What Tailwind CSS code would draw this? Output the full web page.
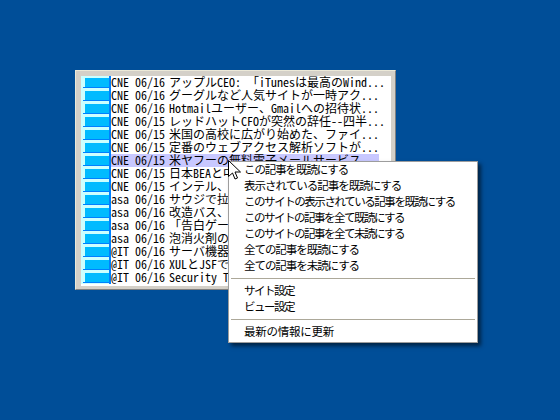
<!DOCTYPE html>
<html><head><meta charset="utf-8">
<script src="https://cdn.jsdelivr.net/npm/@tailwindcss/browser@4"></script>
</head>
<body class="m-0">
<div class="relative w-[560px] h-[420px] overflow-hidden bg-[#004e98] font-['Noto_Sans_Mono_CJK_JP','Noto_Sans_CJK_JP',monospace] text-[12px] text-black">
  <div class="absolute left-[75px] top-[70px] w-[321px] h-[220px] bg-[#d4d0c8] border border-[#ece9d8] border-r-[#808080] border-b-[#808080] pl-[5px] pt-[5px]">
    <div class="flex flex-col w-[310px] h-[210px] bg-white overflow-hidden">
      <div class="flex h-[13px] leading-[12px]"><div class="w-[30px] shrink-0 bg-[#ccffff] border-r-2 border-[#0080ff] pl-[4px] pt-[2px]"><div class="w-[24px] h-[9px] bg-[#00bbff]"></div><div class="-ml-[2px] w-[26px] h-px bg-[#0080ff]"></div></div><div class="whitespace-pre">CNE 06/16 <span class="-ml-[2px]">アップルCEO: 「iTunesは最高のWind...</span></div></div>
      <div class="flex h-[13px] leading-[12px]"><div class="w-[30px] shrink-0 bg-[#ccffff] border-r-2 border-[#0080ff] pl-[4px] pt-[2px]"><div class="w-[24px] h-[9px] bg-[#00bbff]"></div><div class="-ml-[2px] w-[26px] h-px bg-[#0080ff]"></div></div><div class="whitespace-pre">CNE 06/16 <span class="-ml-[2px]">グーグルなど人気サイトが一時アク...</span></div></div>
      <div class="flex h-[13px] leading-[12px]"><div class="w-[30px] shrink-0 bg-[#ccffff] border-r-2 border-[#0080ff] pl-[4px] pt-[2px]"><div class="w-[24px] h-[9px] bg-[#00bbff]"></div><div class="-ml-[2px] w-[26px] h-px bg-[#0080ff]"></div></div><div class="whitespace-pre">CNE 06/16 <span class="-ml-[2px]">Hotmailユーザー、Gmailへの招待状...</span></div></div>
      <div class="flex h-[13px] leading-[12px]"><div class="w-[30px] shrink-0 bg-[#ccffff] border-r-2 border-[#0080ff] pl-[4px] pt-[2px]"><div class="w-[24px] h-[9px] bg-[#00bbff]"></div><div class="-ml-[2px] w-[26px] h-px bg-[#0080ff]"></div></div><div class="whitespace-pre">CNE 06/15 <span class="-ml-[2px]">レッドハットCFOが突然の辞任--四半...</span></div></div>
      <div class="flex h-[13px] leading-[12px]"><div class="w-[30px] shrink-0 bg-[#ccffff] border-r-2 border-[#0080ff] pl-[4px] pt-[2px]"><div class="w-[24px] h-[9px] bg-[#00bbff]"></div><div class="-ml-[2px] w-[26px] h-px bg-[#0080ff]"></div></div><div class="whitespace-pre">CNE 06/15 <span class="-ml-[2px]">米国の高校に広がり始めた、ファイ...</span></div></div>
      <div class="flex h-[13px] leading-[12px]"><div class="w-[30px] shrink-0 bg-[#ccffff] border-r-2 border-[#0080ff] pl-[4px] pt-[2px]"><div class="w-[24px] h-[9px] bg-[#00bbff]"></div><div class="-ml-[2px] w-[26px] h-px bg-[#0080ff]"></div></div><div class="whitespace-pre">CNE 06/15 <span class="-ml-[2px]">定番のウェブアクセス解析ソフトが...</span></div></div>
      <div class="flex h-[13px] leading-[12px]"><div class="w-[30px] shrink-0 bg-[#ccffff] border-r-2 border-[#0080ff] pl-[4px] pt-[2px]"><div class="w-[24px] h-[9px] bg-[#00bbff]"></div><div class="-ml-[2px] w-[26px] h-px bg-[#0080ff]"></div></div><div class="w-[268px] bg-[#c8c8ff] whitespace-pre">CNE 06/15 <span class="-ml-[2px]">米ヤフーの無料電子メールサービス</span></div></div>
      <div class="flex h-[13px] leading-[12px]"><div class="w-[30px] shrink-0 bg-[#ccffff] border-r-2 border-[#0080ff] pl-[4px] pt-[2px]"><div class="w-[24px] h-[9px] bg-[#00bbff]"></div><div class="-ml-[2px] w-[26px] h-px bg-[#0080ff]"></div></div><div class="whitespace-pre">CNE 06/15 <span class="-ml-[2px]">日本BEAと中</span></div></div>
      <div class="flex h-[13px] leading-[12px]"><div class="w-[30px] shrink-0 bg-[#ccffff] border-r-2 border-[#0080ff] pl-[4px] pt-[2px]"><div class="w-[24px] h-[9px] bg-[#00bbff]"></div><div class="-ml-[2px] w-[26px] h-px bg-[#0080ff]"></div></div><div class="whitespace-pre">CNE 06/15 <span class="-ml-[2px]">インテル、</span></div></div>
      <div class="flex h-[13px] leading-[12px]"><div class="w-[30px] shrink-0 bg-[#ccffff] border-r-2 border-[#0080ff] pl-[4px] pt-[2px]"><div class="w-[24px] h-[9px] bg-[#00bbff]"></div><div class="-ml-[2px] w-[26px] h-px bg-[#0080ff]"></div></div><div class="whitespace-pre">asa 06/16 <span class="-ml-[2px]">サウジで拉</span></div></div>
      <div class="flex h-[13px] leading-[12px]"><div class="w-[30px] shrink-0 bg-[#ccffff] border-r-2 border-[#0080ff] pl-[4px] pt-[2px]"><div class="w-[24px] h-[9px] bg-[#00bbff]"></div><div class="-ml-[2px] w-[26px] h-px bg-[#0080ff]"></div></div><div class="whitespace-pre">asa 06/16 <span class="-ml-[2px]">改造バス、</span></div></div>
      <div class="flex h-[13px] leading-[12px]"><div class="w-[30px] shrink-0 bg-[#ccffff] border-r-2 border-[#0080ff] pl-[4px] pt-[2px]"><div class="w-[24px] h-[9px] bg-[#00bbff]"></div><div class="-ml-[2px] w-[26px] h-px bg-[#0080ff]"></div></div><div class="whitespace-pre">asa 06/16 <span class="-ml-[2px]">「告白ゲー</span></div></div>
      <div class="flex h-[13px] leading-[12px]"><div class="w-[30px] shrink-0 bg-[#ccffff] border-r-2 border-[#0080ff] pl-[4px] pt-[2px]"><div class="w-[24px] h-[9px] bg-[#00bbff]"></div><div class="-ml-[2px] w-[26px] h-px bg-[#0080ff]"></div></div><div class="whitespace-pre">asa 06/16 <span class="-ml-[2px]">泡消火剤の</span></div></div>
      <div class="flex h-[13px] leading-[12px]"><div class="w-[30px] shrink-0 bg-[#ccffff] border-r-2 border-[#0080ff] pl-[4px] pt-[2px]"><div class="w-[24px] h-[9px] bg-[#00bbff]"></div><div class="-ml-[2px] w-[26px] h-px bg-[#0080ff]"></div></div><div class="whitespace-pre">@IT 06/16 <span class="-ml-[2px]">サーバ機器</span></div></div>
      <div class="flex h-[13px] leading-[12px]"><div class="w-[30px] shrink-0 bg-[#ccffff] border-r-2 border-[#0080ff] pl-[4px] pt-[2px]"><div class="w-[24px] h-[9px] bg-[#00bbff]"></div><div class="-ml-[2px] w-[26px] h-px bg-[#0080ff]"></div></div><div class="whitespace-pre">@IT 06/16 <span class="-ml-[2px]">XULとJSFで</span></div></div>
      <div class="flex h-[13px] leading-[12px]"><div class="w-[30px] shrink-0 bg-[#ccffff] border-r-2 border-[#0080ff] pl-[4px] pt-[2px]"><div class="w-[24px] h-[9px] bg-[#00bbff]"></div><div class="-ml-[2px] w-[26px] h-px bg-[#0080ff]"></div></div><div class="whitespace-pre">@IT 06/16 <span class="-ml-[2px]">Security T</span></div></div>
    </div>
  </div>
  <div class="absolute left-[228px] top-[161px] w-[250px] h-[182px] bg-white border border-[#9d9d9d] shadow-[3px_3px_4px_rgba(0,0,0,0.55)] font-['Noto_Sans_CJK_JP',sans-serif] text-[11.5px]">
    <div class="pl-[15px] h-[16px] leading-[15px] tracking-[-1.1px] whitespace-nowrap">この記事を既読にする</div>
    <div class="pl-[15px] h-[16px] leading-[15px] tracking-[-1px] whitespace-nowrap">表示されている記事を既読にする</div>
    <div class="pl-[15px] h-[16px] leading-[15px] tracking-[-1.45px] whitespace-nowrap">このサイトの表示されている記事を既読にする</div>
    <div class="pl-[15px] h-[16px] leading-[15px] tracking-[-1.5px] whitespace-nowrap">このサイトの記事を全て既読にする</div>
    <div class="pl-[15px] h-[16px] leading-[15px] tracking-[-1.5px] whitespace-nowrap">このサイトの記事を全て未読にする</div>
    <div class="pl-[15px] h-[16px] leading-[15px] tracking-[-1.05px] whitespace-nowrap">全ての記事を既読にする</div>
    <div class="pl-[15px] h-[16px] leading-[15px] tracking-[-1.05px] whitespace-nowrap">全ての記事を未読にする</div>
    <div class="h-px bg-[#aca899] mx-[2px] my-[4px]"></div>
    <div class="pl-[15px] h-[16px] leading-[15px] tracking-[-1.5px] whitespace-nowrap">サイト設定</div>
    <div class="pl-[15px] h-[16px] leading-[15px] tracking-[-1.5px] whitespace-nowrap">ビュー設定</div>
    <div class="h-px bg-[#aca899] mx-[2px] my-[4px]"></div>
    <div class="pl-[15px] h-[16px] leading-[15px] tracking-[-0.25px] whitespace-nowrap">最新の情報に更新</div>
  </div>
  <svg class="absolute left-[228px] top-[160px]" width="14" height="21" viewBox="0 0 14 21"><path d="M0.5 0.5V16.5L4.5 13L7 19L9.5 18L7 12H12.5Z" fill="#fff" stroke="#000"/></svg>
</div>
</body></html>
